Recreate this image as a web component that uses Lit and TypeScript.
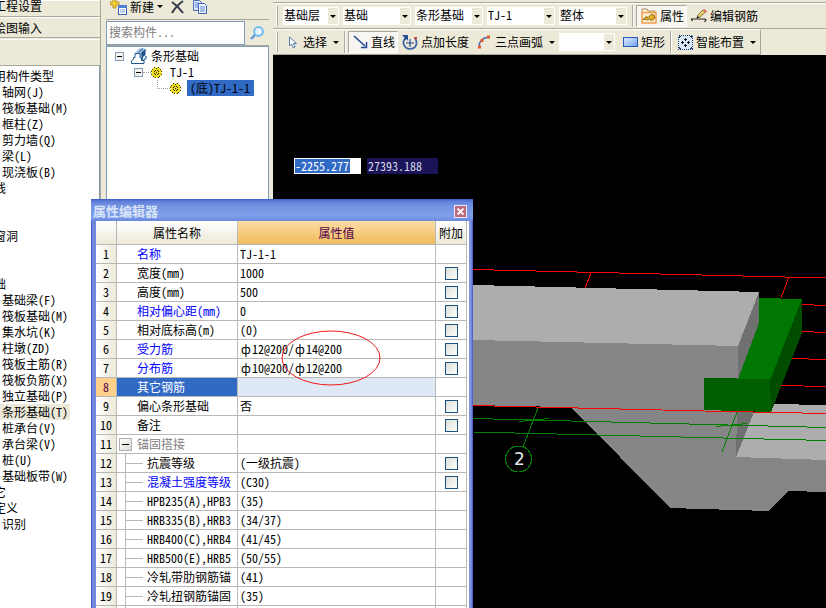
import { LitElement, html, css, svg, nothing } from "lit";
import { customElement } from "lit/decorators.js";
import { classMap } from "lit/directives/class-map.js";

type TreeItem = { text: string; child?: boolean; current?: boolean };
type PropRow = {
  name: string;
  value?: unknown;
  blue?: boolean;
  check?: boolean;
  kind?: "selected" | "group" | "sub";
};

const base = css`
  *,
  *::before,
  *::after {
    box-sizing: border-box;
  }
  button,
  input,
  select {
    font: inherit;
    font-feature-settings: inherit;
    color: inherit;
    margin: 0;
    padding: 0;
    border: 0;
    border-radius: 0;
    background: none;
  }
  svg {
    display: block;
    flex: none;
  }
`;

const group = (text: string): TreeItem => ({ text });
const leaf = (text: string, current = false): TreeItem => ({ text, child: true, current });

const TYPES: TreeItem[] = [
  group("用构件类型"),
  leaf("轴网(J)"),
  leaf("筏板基础(M)"),
  leaf("框柱(Z)"),
  leaf("剪力墙(Q)"),
  leaf("梁(L)"),
  leaf("现浇板(B)"),
  group("线"),
  group(""),
  group(""),
  group("窗洞"),
  group(""),
  group(""),
  group("础"),
  leaf("基础梁(F)"),
  leaf("筏板基础(M)"),
  leaf("集水坑(K)"),
  leaf("柱墩(ZD)"),
  leaf("筏板主筋(R)"),
  leaf("筏板负筋(X)"),
  leaf("独立基础(P)"),
  leaf("条形基础(T)", true),
  leaf("桩承台(V)"),
  leaf("承台梁(V)"),
  leaf("桩(U)"),
  leaf("基础板带(W)"),
  group("它"),
  group("定义"),
  leaf("识别"),
];

@customElement("type-list")
class TypeList extends LitElement {
  static styles = [
    base,
    css`
      :host {
        display: flex;
        flex-direction: column;
        overflow: hidden;
        background: #ece9d8;
        border-right: 1px solid #aca899;
      }
      .tab {
        height: 21px;
        flex: none;
        padding: 0;
        text-indent: -6px;
        text-align: left;
        border-top: 1px solid #fff;
        border-bottom: 1px solid #aca899;
      }
      .tab.first {
        height: 17px;
        padding-bottom: 6px;
        line-height: 10px;
      }
      .blank {
        height: 27px;
        flex: none;
        margin-top: 1px;
        border-top: 1px solid #fff;
        border-bottom: 1px solid #aca899;
      }
      .list {
        flex: 1;
        min-height: 0;
        margin: 0;
        padding: 2px 0 0;
        list-style: none;
        background: #fff;
        border-right: 1px solid #7f9db9;
        overflow: hidden;
      }
      .item {
        height: 16px;
        line-height: 16px;
        margin-left: -6px;
        white-space: nowrap;
      }
      .item.child {
        margin-left: 0;
        padding-left: 2px;
        width: max-content;
      }
      .item.current {
        background: #ece9d8;
        padding-right: 2px;
      }
    `,
  ];
  render() {
    return html`
      <button class="tab first">工程设置</button>
      <button class="tab">绘图输入</button>
      <div class="blank"></div>
      <ul class="list">
        ${TYPES.map(
          (t) =>
            html`<li class=${classMap({ item: true, child: !!t.child, current: !!t.current })}>${t.text}</li>`
        )}
      </ul>
    `;
  }
}

const gear = html`<svg width="11" height="11" viewBox="0 0 11 11" shape-rendering="crispEdges">
  <path d="M3 0h2v1h1V0h2v1h1v1h1v1h1v2h-1v1h1v2h-1v1H9v1H8v1H6v-1H5v1H3v-1H2V9H1V8H0V6h1V5H0V3h1V2h1V1h1z" fill="#f0dc20" />
  <path d="M3 0h1v1H3zM7 0h1v1H7zM1 2h1v1H1zM9 2h1v1H9zM0 4h1v1H0zM10 4h1v1h-1zM0 7h1v1H0zM10 7h1v1h-1zM2 9h1v1H2zM8 9h1v1H8zM4 10h1v1H4zM7 10h1v1H7zM5 1h1v1H5z" fill="#3c3800" />
  <path d="M4 3h1v1H4zM6 3h1v1H6zM3 4h1v1H3zM7 4h1v1H7zM5 5h1v1H5zM3 6h1v1H3zM7 6h1v1H7zM4 7h1v1H4zM6 7h1v1H6z" fill="#2c2800" />
</svg>`;

const expander = html`<svg width="9" height="9" viewBox="0 0 9 9" shape-rendering="crispEdges">
  <rect x=".5" y=".5" width="8" height="8" fill="#f4f2ea" stroke="#7f9db9" />
  <path d="M2 4h5v1H2z" fill="#000" />
</svg>`;

@customElement("component-panel")
class ComponentPanel extends LitElement {
  static styles = [
    base,
    css`
      :host {
        display: flex;
        flex-direction: column;
        min-width: 0;
        background: #ece9d8;
      }
      .bar {
        display: flex;
        align-items: center;
        height: 20px;
        flex: none;
        padding: 0 0 6px 4px;
        border-bottom: 1px solid #aca899;
      }
      .new {
        display: flex;
        align-items: center;
        gap: 3px;
        height: 13px;
      }
      .drop {
        border: 3px solid transparent;
        border-top-color: #000;
        border-bottom: 0;
      }
      .tool {
        margin-left: 8px;
      }
      .search {
        display: flex;
        height: 26px;
        flex: none;
        padding-top: 1px;
        border-bottom: 1px solid #aca899;
      }
      .field {
        flex: 1;
        min-width: 0;
        height: 24px;
        padding: 0 2px 4px;
        background: #fff;
        border: 1px solid #7f9db9;
      }
      .field::placeholder {
        color: #808080;
        opacity: 1;
      }
      .find {
        width: 24px;
        display: grid;
        place-items: center;
      }
      .tree {
        flex: 1;
        min-height: 0;
        background: #fff;
        border: 1px solid #7f9db9;
        border-bottom: 0;
        padding-top: 1px;
      }
      .node {
        display: flex;
        align-items: center;
        height: 16px;
        white-space: nowrap;
        padding-left: 8px;
      }
      .node.two {
        padding-left: 27px;
      }
      .node.three {
        padding-left: 50px;
      }
      .icon {
        margin: 0 4px 0 7px;
      }
      .dots {
        width: 8px;
        border-top: 1px dotted #a0a0a0;
      }
      .elbow {
        width: 13px;
        height: 9px;
        align-self: flex-start;
        border-left: 1px dotted #a0a0a0;
        border-bottom: 1px dotted #a0a0a0;
      }
      .label {
        margin-left: 8px;
      }
      .picked {
        margin-left: 6px;
        padding: 0 4px 0 3px;
        line-height: 16px;
        background: #316ac5;
        color: #000;
      }
    `,
  ];
  render() {
    return html`
      <div class="bar">
        <button class="new">
          <svg width="17" height="16" viewBox="0 0 17 16">
            <path d="M3 0h3v3h3v3H6v3H3V6H0V3h3z" fill="#f2cf3a" stroke="#a8861a" stroke-width=".8" />
            <rect x="8.5" y="6.5" width="8" height="9" fill="#fff" stroke="#3c64b4" />
            <path d="M8 6h9v3H8z" fill="#4f7fd6" />
            <path d="M10 11h5M10 13h5" stroke="#7d9fe0" />
          </svg>
          新建<i class="drop"></i>
        </button>
        <button class="tool" aria-label="删除">
          <svg width="13" height="14" viewBox="0 0 13 14">
            <path d="M1 2Q7 6 12 13M12 1Q5 6 1 13" fill="none" stroke="#333a48" stroke-width="2" />
          </svg>
        </button>
        <button class="tool" aria-label="复制">
          <svg width="16" height="16" viewBox="0 0 16 16">
            <path d="M1.500 1.500h6l2 2v8h-8z" fill="#dce8fb" stroke="#4a6fb8" />
            <path d="M6.500 4.500h6l2 2v8h-8z" fill="#f4f8ff" stroke="#3a62b4" />
            <path d="M3 4h4M3 6h3M3 8h3M8 8h5M8 10h5M8 12h5" stroke="#5b87d6" />
          </svg>
        </button>
      </div>
      <div class="search">
        <input class="field" placeholder="搜索构件..." aria-label="搜索构件" />
        <button class="find" aria-label="搜索">
          <svg width="14" height="14" viewBox="0 0 14 14">
            <circle cx="8.500" cy="5.500" r="4.400" fill="#e6f4ff" stroke="#6cbcf0" stroke-width="2" />
            <path d="M5 9l-4 4" stroke="#5a9ad8" stroke-width="2.400" />
          </svg>
        </button>
      </div>
      <div class="tree">
        <div class="node">
          ${expander}
          <svg class="icon" width="16" height="16" viewBox="0 0 16 16">
            <path d="M4 5l4-4.500h6l1.500 1.500L12 5v9l-3-2-3-7z" fill="#a8c8e4" />
            <path d="M10 5L14.500 1v6L12 9v6z" fill="#1f5288" />
            <path d="M8 4l4-3.500M12.500 12.500L15 10V8" fill="none" stroke="#4a80b4" stroke-width="1.500" />
            <path d="M4 5.500h5v4h1.500v3H13v3H.5v-2.500l2-2V9.500H4z" fill="#fff" stroke="#1f5288" />
          </svg>
          <span>条形基础</span>
        </div>
        <div class="node two">${expander}<i class="dots"></i>${gear}<span class="label">TJ-1</span></div>
        <div class="node three"><i class="elbow"></i>${gear}<span class="picked">(底)TJ-1-1</span></div>
      </div>
    `;
  }
}

@customElement("tool-bars")
class ToolBars extends LitElement {
  static styles = [
    base,
    css`
      :host {
        display: block;
        background: #ece9d8;
        overflow: hidden;
      }
      .edge {
        height: 3px;
        border-bottom: 1px solid #aca899;
      }
      .bar {
        display: flex;
        align-items: center;
        height: 26px;
        padding-left: 3px;
        border-top: 1px solid #fff;
        border-bottom: 1px solid #aca899;
        white-space: nowrap;
      }
      .bar.short {
        width: max-content;
        border-right: 1px solid #aca899;
      }
      .grip {
        width: 2px;
        height: 20px;
        margin-right: 5px;
        border-left: 1px solid #fff;
        border-right: 1px solid #aca899;
      }
      .combo {
        position: relative;
        display: block;
        width: 68px;
        height: 18px;
        margin-right: 4px;
        background: #fff;
      }
      .combo.narrow {
        width: 56px;
      }
      .combo::after {
        content: "";
        position: absolute;
        inset: 1px 1px 1px auto;
        width: 10px;
        background: #ece9d8;
        pointer-events: none;
      }
      .combo::before {
        content: "";
        position: absolute;
        z-index: 1;
        right: 3px;
        top: 8px;
        border: 3px solid transparent;
        border-top-color: #000;
        border-bottom: 0;
        pointer-events: none;
      }
      .pick {
        appearance: none;
        width: 100%;
        height: 16px;
        padding-left: 1px;
        line-height: 14px;
      }
      .sep {
        width: 2px;
        height: 22px;
        margin: 0 2px 0 1px;
        border-left: 1px solid #aca899;
        border-right: 1px solid #fff;
      }
      .tool {
        display: flex;
        align-items: center;
        gap: 3px;
        height: 22px;
        padding: 0 4px;
      }
      .tool.on {
        padding: 0 2px 0 4px;
        background: #f7f6f0;
        border: 1px solid #aca899;
        border-right-color: #fff;
        border-bottom-color: #fff;
      }
      .drop {
        margin-left: 3px;
        border: 3px solid transparent;
        border-top-color: #000;
        border-bottom: 0;
      }
    `,
  ];
  private combo(label: string, text: string, narrow = false) {
    return html`<span class=${classMap({ combo: true, narrow })}
      ><select class="pick" aria-label=${label}>
        <option>${text}</option>
      </select></span
    >`;
  }
  render() {
    return html`
      <div class="edge"></div>
      <div class="bar">
        <i class="grip"></i>
        ${this.combo("楼层", "基础层", true)} ${this.combo("类别", "基础")} ${this.combo("类型", "条形基础")}
        ${this.combo("构件", "TJ-1")} ${this.combo("范围", "整体")}
        <i class="sep"></i>
        <button class="tool on">
          <svg width="16" height="16" viewBox="0 0 16 16">
            <path d="M1 3V1h5l1 2h7v2H1z" fill="#fdf3d8" stroke="#a8845a" />
            <rect x="1" y="4.500" width="14" height="10.500" fill="#ffeccc" stroke="#f0a050" stroke-width="1.500" />
            <path d="M2 11.500l3-3 2 1 3-3 3 .5 1 3-3 2.500-3-1.500-2 1-2-1-2 1z" fill="#e0b020" stroke="#6e5510" stroke-width=".8" />
          </svg>
          属性
        </button>
        <button class="tool">
          <svg width="16" height="14" viewBox="0 0 16 14">
            <path d="M1.500 12L0 10h14l1 1-1.500 2" fill="none" stroke="#222" stroke-width="1.200" />
            <path d="M6 9l1-3L12 1l2.500 2L9 8z" fill="#e6d06a" stroke="#6b5520" stroke-width=".8" />
            <path d="M11.500 1.500L13 0l3 2-1.500 2z" fill="#d87058" />
            <path d="M5.500 9.500l1-2.500 2 1.500z" fill="#222" />
          </svg>
          编辑钢筋
        </button>
      </div>
      <div class="bar short">
        <i class="grip"></i>
        <button class="tool">
          <svg width="13" height="13" viewBox="0 0 13 13">
            <path d="M2.500 1v9l2-2 2 4 1.500-1-1.500-3.500h3z" fill="#fff" stroke="#5878b0" />
          </svg>
          选择<i class="drop"></i>
        </button>
        <i class="sep"></i>
        <button class="tool on">
          <svg width="15" height="14" viewBox="0 0 15 14">
            <path d="M1 1l11 10" stroke="#1d4596" stroke-width="1.500" />
            <path d="M13.500 7v5.500H8" fill="none" stroke="#1d4596" stroke-width="1.500" />
          </svg>
          直线
        </button>
        <button class="tool">
          <svg width="16" height="16" viewBox="0 0 16 16">
            <path d="M4 4Q1 6 1.500 9.500 3 15 8 15t6.500-5Q15 7 13 4" fill="none" stroke="#3c64a4" stroke-width="1.700" />
            <path d="M0 1h6v6L4.500 5 3 6 2 3z" fill="#234f94" />
            <path d="M8 5v8M4 9h8" stroke="#234f94" stroke-width="1.200" />
            <path d="M12 4h3" stroke="#c84a3a" stroke-width="2" />
          </svg>
          点加长度
        </button>
        <button class="tool">
          <svg width="15" height="14" viewBox="0 0 15 14">
            <path d="M2 12Q2 3 12 2" fill="none" stroke="#4a6cb4" stroke-width="1.300" />
            <path d="M1 10.500h3v3H1zM3.500 4h3v3h-3zM10 .5h3v3h-3z" fill="#e05a30" />
          </svg>
          三点画弧<i class="drop"></i>
        </button>
        ${this.combo("画弧方式", "", true)}
        <button class="tool">
          <svg width="15" height="12" viewBox="0 0 15 12">
            <defs>
              <linearGradient id="fill" x2="1" y2="1">
                <stop stop-color="#e4eeff" />
                <stop offset="1" stop-color="#6fa0f4" />
              </linearGradient>
            </defs>
            <rect x=".5" y="1.500" width="14" height="9" fill="url(#fill)" stroke="#2a58b8" />
          </svg>
          矩形
        </button>
        <i class="sep"></i>
        <button class="tool">
          <svg width="15" height="15" viewBox="0 0 15 15" shape-rendering="crispEdges">
            <rect x=".5" y=".5" width="14" height="14" fill="#dce9fa" stroke="#1c3c70" stroke-dasharray="1 1" />
            <path d="M1 1h2v1H2v1H1zM12 1h2v2h-1V2h-1zM1 12h1v1h1v1H1zM13 12h1v2h-2v-1h1z" fill="#1c3c70" />
            <path d="M7 3h1v3H7zM6 4h3v1H6zM7 9h1v3H7zM6 10h3v1H6zM3 7h3v1H3zM4 6h1v3H4zM9 7h3v1H9zM10 6h1v3h-1z" fill="#111" />
          </svg>
          智能布置<i class="drop"></i>
        </button>
      </div>
    `;
  }
}

@customElement("model-view")
class ModelView extends LitElement {
  static styles = [
    base,
    css`
      :host {
        display: block;
        position: relative;
        background: #000;
        overflow: hidden;
      }
      .scene {
        width: 100%;
        height: 100%;
      }
      .mark {
        font: 17px "DejaVu Sans", sans-serif;
        fill: #e8e8e8;
      }
      .coords {
        position: absolute;
        left: 21px;
        top: 103px;
        display: flex;
        gap: 6px;
      }
      .coord {
        width: 67px;
        height: 16px;
        display: flex;
        align-items: center;
        padding-left: 1px;
        background: #fff;
      }
      .value {
        width: 55px;
        height: 14px;
        background: #316ac5;
        color: #fff;
      }
      .coord.dim {
        width: 71px;
        background: #1a1458;
      }
      .dim .value {
        background: none;
        color: #d8d8e8;
      }
    `,
  ];
  render() {
    return html`
      <svg class="scene" viewBox="273 55 553 553" preserveAspectRatio="xMinYMin slice" shape-rendering="crispEdges">
        ${svg`
        <g fill="none" stroke="#f00">
          <path d="M473 269.500L826 278M591 273l-6 15M788.500 278l-7.500 20M802 304.500l24 1M802 331.500l24 1M791 358.500l35 1M780 385.500l46 1"/>
        </g>
        <path d="M571 407l167 3-2 47 90 3v32l-38-1-20 20-98-3z" fill="#868686"/>
        <path d="M772 404l54 1v55l-90-3 18-45z" fill="#adadad"/>
        <path d="M737 412h17l-18 45z" fill="#707070"/>
        <path d="M473 285l286 7-21 54-265-6z" fill="#adadad"/>
        <path d="M473 340l265 6v65l-265-6z" fill="#868686"/>
        <path d="M759 292v31l-21 56v-33z" fill="#707070"/>
        <path d="M759 298l43 1-32 82-32-2 21-56z" fill="#007700"/>
        <path d="M802 299v34l-31 79-1-32z" fill="#004d00"/>
        <path d="M704 378l66 1 1 33-67-2z" fill="#005f00"/>
        <path d="M473 405.500l231 5.500 122 2.500" stroke="#f00" fill="none"/>
        <g fill="none" stroke="#008000">
          <path d="M473 418.500l353 9M473 432l353 8.500M519 421.500l30-3M716 426.500l31-3M538 408l-15 39M737 412l-15 40"/>
          <circle cx="518.500" cy="459" r="13"/>
        </g>
        <text class="mark" x="514" y="465">2</text>`}
      </svg>
      <div class="coords">
        <span class="coord"><input class="value" aria-label="X" value="-2255.277" /></span>
        <span class="coord dim"><input class="value" aria-label="Y" value="27393.188" /></span>
      </div>
    `;
  }
}

const bar = (a: string, b: string) => html`<span class="rebar">ф</span>${a}/<span class="rebar">ф</span>${b}`;

const ROWS: PropRow[] = [
  { name: "名称", value: "TJ-1-1", blue: true },
  { name: "宽度(mm)", value: "1000", check: true },
  { name: "高度(mm)", value: "500", check: true },
  { name: "相对偏心距(mm)", value: "0", blue: true, check: true },
  { name: "相对底标高(m)", value: "(0)", check: true },
  { name: "受力筋", value: bar("12@200", "14@200"), blue: true, check: true },
  { name: "分布筋", value: bar("10@200", "12@200"), blue: true, check: true },
  { name: "其它钢筋", kind: "selected" },
  { name: "偏心条形基础", value: "否", check: true },
  { name: "备注", check: true },
  { name: "锚固搭接", kind: "group" },
  { name: "抗震等级", value: "(一级抗震)", kind: "sub", check: true },
  { name: "混凝土强度等级", value: "(C30)", kind: "sub", blue: true, check: true },
  { name: "HPB235(A),HPB3", value: "(35)", kind: "sub" },
  { name: "HRB335(B),HRB3", value: "(34/37)", kind: "sub" },
  { name: "HRB400(C),HRB4", value: "(41/45)", kind: "sub" },
  { name: "HRB500(E),HRB5", value: "(50/55)", kind: "sub" },
  { name: "冷轧带肋钢筋锚", value: "(41)", kind: "sub" },
  { name: "冷轧扭钢筋锚固", value: "(35)", kind: "sub" },
];

@customElement("property-editor")
class PropertyEditor extends LitElement {
  static styles = [
    base,
    css`
      :host {
        display: flex;
        flex-direction: column;
        overflow: hidden;
        background: linear-gradient(90deg, #4a5cc4 1px, #7088e0 1px, #7f96e4 calc(100% - 2px), #4a50bc);
      }
      .title {
        display: flex;
        align-items: center;
        justify-content: space-between;
        height: 22px;
        flex: none;
        padding: 2px 6px 0 2px;
        background: linear-gradient(#4058c8, #5c7cd8 2px, #7391e2 6px, #7ea0ea 17px, #6a88de);
        color: #d8e4f8;
        font-size: 13px;
        font-weight: bold;
      }
      .close {
        width: 13px;
        height: 13px;
        background: #bd6a80;
        outline: 1px solid #e8e8f8;
        outline-offset: -1px;
        display: grid;
        place-items: center;
      }
      .body {
        flex: 1;
        min-height: 0;
        margin: 0 4px 0 5px;
        background: #fff;
        overflow: hidden;
      }
      .grid {
        table-layout: fixed;
        width: 371px;
        border-collapse: separate;
        border-spacing: 0;
      }
      .no {
        width: 21px;
      }
      .name {
        width: 121px;
      }
      .extra {
        width: 31px;
      }
      th,
      td {
        height: 19px;
        padding: 0;
        line-height: 18px;
        font-weight: normal;
        white-space: nowrap;
        overflow: hidden;
        border-right: 1px solid #b8b8b8;
        border-bottom: 1px solid #b8b8b8;
      }
      thead th {
        height: 24px;
        line-height: 23px;
        background: linear-gradient(#fff, #ece9d8);
      }
      thead .value {
        background: linear-gradient(#fcdca4, #f0bc5c);
        color: #500050;
      }
      tbody .no {
        background: linear-gradient(90deg, #fff, #ece9d8);
      }
      tbody .name {
        padding-left: 20px;
        text-align: left;
      }
      tbody .value {
        padding-left: 2px;
      }
      .blue .name {
        color: #00f;
      }
      .selected .no {
        background: #ffd08a;
        color: #500050;
      }
      .selected .name {
        background: #316ac5;
        color: #fff;
      }
      .selected .value {
        background: #dfe9f5;
      }
      .group .name {
        padding-left: 2px;
        color: #808080;
      }
      .wrap {
        display: flex;
        align-items: center;
        gap: 5px;
        height: 18px;
      }
      .fold {
        width: 13px;
        height: 13px;
        background: linear-gradient(135deg, #fff, #dcdcd4);
        border: 1px solid #b0b0b0;
        display: grid;
        place-items: center;
      }
      .sub .name {
        padding-left: 8px;
      }
      .sub .wrap::before {
        content: "";
        width: 17px;
        height: 1px;
        background: #b8b8b8;
      }
      .sub .wrap {
        border-left: 1px solid #b8b8b8;
        gap: 4px;
      }
      .extra {
        text-align: center;
      }
      .tick {
        appearance: none;
        display: block;
        width: 13px;
        height: 13px;
        margin: 1px auto 0;
        border: 1px solid #1c5180;
        background: linear-gradient(135deg, #dcdcd7, #fff);
      }
      .rebar {
        display: inline-block;
        width: 12px;
        line-height: 12px;
        text-align: center;
      }
      .ring {
        position: absolute;
        left: 190px;
        top: 131px;
      }
    `,
  ];
  private name(r: PropRow) {
    if (r.kind === "group")
      return html`<span class="wrap"
        ><button class="fold" aria-label="折叠">
          <svg width="7" height="1" viewBox="0 0 7 1"><path d="M0 0h7v1H0z" /></svg></button
        >${r.name}</span
      >`;
    return r.kind === "sub" ? html`<span class="wrap">${r.name}</span>` : r.name;
  }
  render() {
    return html`
      <div class="title">
        <span>属性编辑器</span>
        <button class="close" aria-label="关闭">
          <svg width="7" height="7" viewBox="0 0 7 7"><path d="M.5 .5l6 6M6.500 .5l-6 6" stroke="#fff" stroke-width="1.800" /></svg>
        </button>
      </div>
      <div class="body">
      <table class="grid">
        <thead>
          <tr>
            <th class="no"></th>
            <th class="name">属性名称</th>
            <th class="value">属性值</th>
            <th class="extra">附加</th>
          </tr>
        </thead>
        <tbody>
          ${ROWS.map(
            (r, i) => html`<tr class=${classMap({ blue: !!r.blue, [r.kind ?? "plain"]: true })}>
              <th class="no">${i + 1}</th>
              <th class="name">${this.name(r)}</th>
              <td class="value">${r.value ?? nothing}</td>
              <td class="extra">
                ${r.check ? html`<input class="tick" type="checkbox" aria-label=${r.name + " 附加"} />` : nothing}
              </td>
            </tr>`
          )}
          <tr class="sub">
            <th class="no"></th>
            <th class="name"><span class="wrap"></span></th>
            <td class="value"></td>
            <td class="extra"></td>
          </tr>
        </tbody>
      </table>
      </div>
      <svg class="ring" width="100" height="56" viewBox="0 0 100 56">
        <ellipse cx="50" cy="28" rx="49" ry="27" fill="none" stroke="#f01818" />
      </svg>
    `;
  }
}

@customElement("app-root")
class AppRoot extends LitElement {
  static styles = [
    base,
    css`
      :host {
        position: relative;
        display: grid;
        grid-template-columns: 101px 164px minmax(0, 1fr);
        column-gap: 4px;
        height: 100vh;
        overflow: hidden;
        background: #ece9d8;
        color: #000;
        font: 12px/16px "Noto Sans CJK SC", sans-serif;
        font-feature-settings: "hwid";
      }
      .types,
      .parts {
        min-height: 0;
      }
      .parts {
        margin-left: 1px;
      }
      .work {
        display: flex;
        flex-direction: column;
        min-width: 0;
      }
      .view {
        flex: 1;
        min-height: 0;
      }
      .editor {
        position: absolute;
        left: 91px;
        top: 199px;
        bottom: 0;
        width: 382px;
      }
    `,
  ];
  render() {
    return html`
      <type-list class="types"></type-list>
      <component-panel class="parts"></component-panel>
      <main class="work">
        <tool-bars></tool-bars>
        <model-view class="view"></model-view>
      </main>
      <property-editor class="editor"></property-editor>
    `;
  }
}
